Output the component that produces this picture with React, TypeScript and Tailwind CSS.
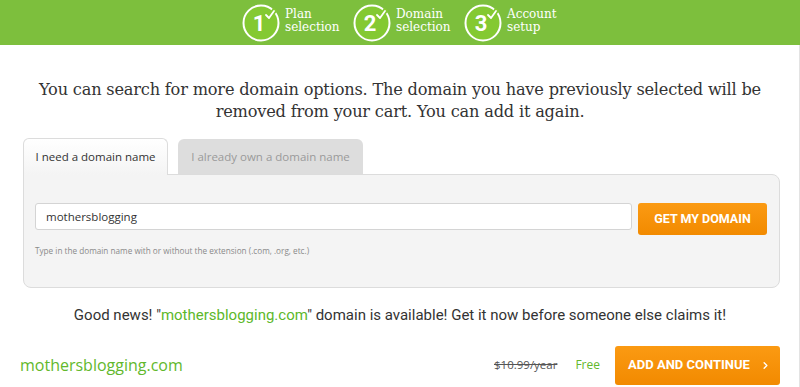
import { ChevronRight } from 'lucide-react';

const slab = "font-['DejaVu_Serif',_'Liberation_Serif',_serif]";
const sans = "font-['Open_Sans',_'Liberation_Sans',_sans-serif]";
const btnFont = "font-['Roboto',_'Liberation_Sans',_sans-serif]";

function StepBadge({ n }: { n: number }) {
  return (
    <svg width="40" height="40" viewBox="0 0 40 40" className="shrink-0">
      <circle cx="20" cy="20" r="17.5" fill="#84c932" stroke="#ffffff" strokeWidth="2" />
      <path d="M25 12 L28 15 L33 8" fill="none" stroke="#84c932" strokeWidth="5" strokeLinecap="round" />
      <path d="M25 12 L28 15 L33 8" fill="none" stroke="#ffffff" strokeWidth="1.8" strokeLinecap="round" strokeLinejoin="round" />
      <text x="18" y="28" textAnchor="middle" fill="#ffffff" fontSize="22" fontWeight="700" fontFamily="Roboto, sans-serif">
        {n}
      </text>
    </svg>
  );
}

function Step({ n, top, bottom }: { n: number; top: string; bottom: string }) {
  return (
    <div className="flex items-center gap-[4px] w-[111px]">
      <StepBadge n={n} />
      <div className={`${slab} text-white text-[12px] leading-[13px] -mt-[4px]`}>
        <div>{top}</div>
        <div>{bottom}</div>
      </div>
    </div>
  );
}

export default function App() {
  return (
    <div className="w-[800px] h-[387px] bg-white overflow-hidden relative">
      <div className="absolute right-0 top-[45px] bottom-0 w-px bg-[#e3e3e3]" />
      <div className="h-[45px] bg-[#7dbf3d] flex items-center pl-[241px]">
        <Step n={1} top="Plan" bottom="selection" />
        <Step n={2} top="Domain" bottom="selection" />
        <Step n={3} top="Account" bottom="setup" />
      </div>

      <p className={`${slab} text-[#333] text-[16.2px] leading-[22px] text-center mt-[34px] tracking-[-0.2px]`}>
        You can search for more domain options. The domain you have previously selected will be
        <br />
        removed from your cart. You can add it again.
      </p>

      <div className="ml-[23px] w-[757px] mt-[15px]">
        <div className={`${sans} flex items-end gap-[10px] text-[11.5px]`}>
          <div className="h-[37px] w-[145px] rounded-t-[6px] border border-b-0 border-[#dcdcdc] bg-gradient-to-b from-white to-[#f4f4f4] flex items-center justify-center text-[#333] relative z-10 -mb-px">
            I need a domain name
          </div>
          <div className="h-[35px] w-[185px] rounded-t-[6px] bg-[#dddddd] flex items-center justify-center text-[#9a9a9a]">
            I already own a domain name
          </div>
        </div>
        <div className="h-[114px] bg-[#f4f4f4] border border-[#dcdcdc] rounded-b-[8px] rounded-tr-[8px] px-[11px] pt-[28px]">
          <div className="flex gap-[6px] items-start">
            <div className={`${sans} h-[27px] w-[597px] bg-white border border-[#d4d4d4] rounded-[3px] flex items-center px-[10px] text-[11.5px] text-[#333]`}>
              mothersblogging
            </div>
            <button className={`${btnFont} h-[32px] w-[129px] rounded-[3px] bg-gradient-to-b from-[#fb9a12] to-[#f28a00] text-white font-bold text-[12.5px]`}>
              GET MY DOMAIN
            </button>
          </div>
          <div className={`${sans} text-[8.2px] text-[#8a8a8a] mt-[10px]`}>
            Type in the domain name with or without the extension (.com, .org, etc.)
          </div>
        </div>
      </div>

      <p className="font-['Roboto',_'Liberation_Sans',_sans-serif] text-[15px] text-[#333] text-center mt-[16px]">
        Good news! "<span className="text-[#5db82a]">mothersblogging.com</span>" domain is available! Get it now before someone else claims it!
      </p>

      <div className="flex items-center mt-[19px] pl-[20px] pr-[20px]">
        <div className={`${sans} text-[16px] text-[#62b82c] flex-1`}>mothersblogging.com</div>
        <div className={`${sans} text-[11.5px] text-[#555] line-through mr-[18px]`}>$10.99/year</div>
        <div className={`${sans} text-[12px] text-[#62b82c] mr-[15px]`}>Free</div>
        <button className={`${btnFont} h-[39px] w-[165px] rounded-[3px] bg-gradient-to-b from-[#fb9a12] to-[#f28a00] text-white font-bold text-[13px] flex items-center justify-center gap-[10px] pl-[4px]`}>
          ADD AND CONTINUE
          <ChevronRight className="w-[11px] h-[11px]" strokeWidth={3} />
        </button>
      </div>
    </div>
  );
}
